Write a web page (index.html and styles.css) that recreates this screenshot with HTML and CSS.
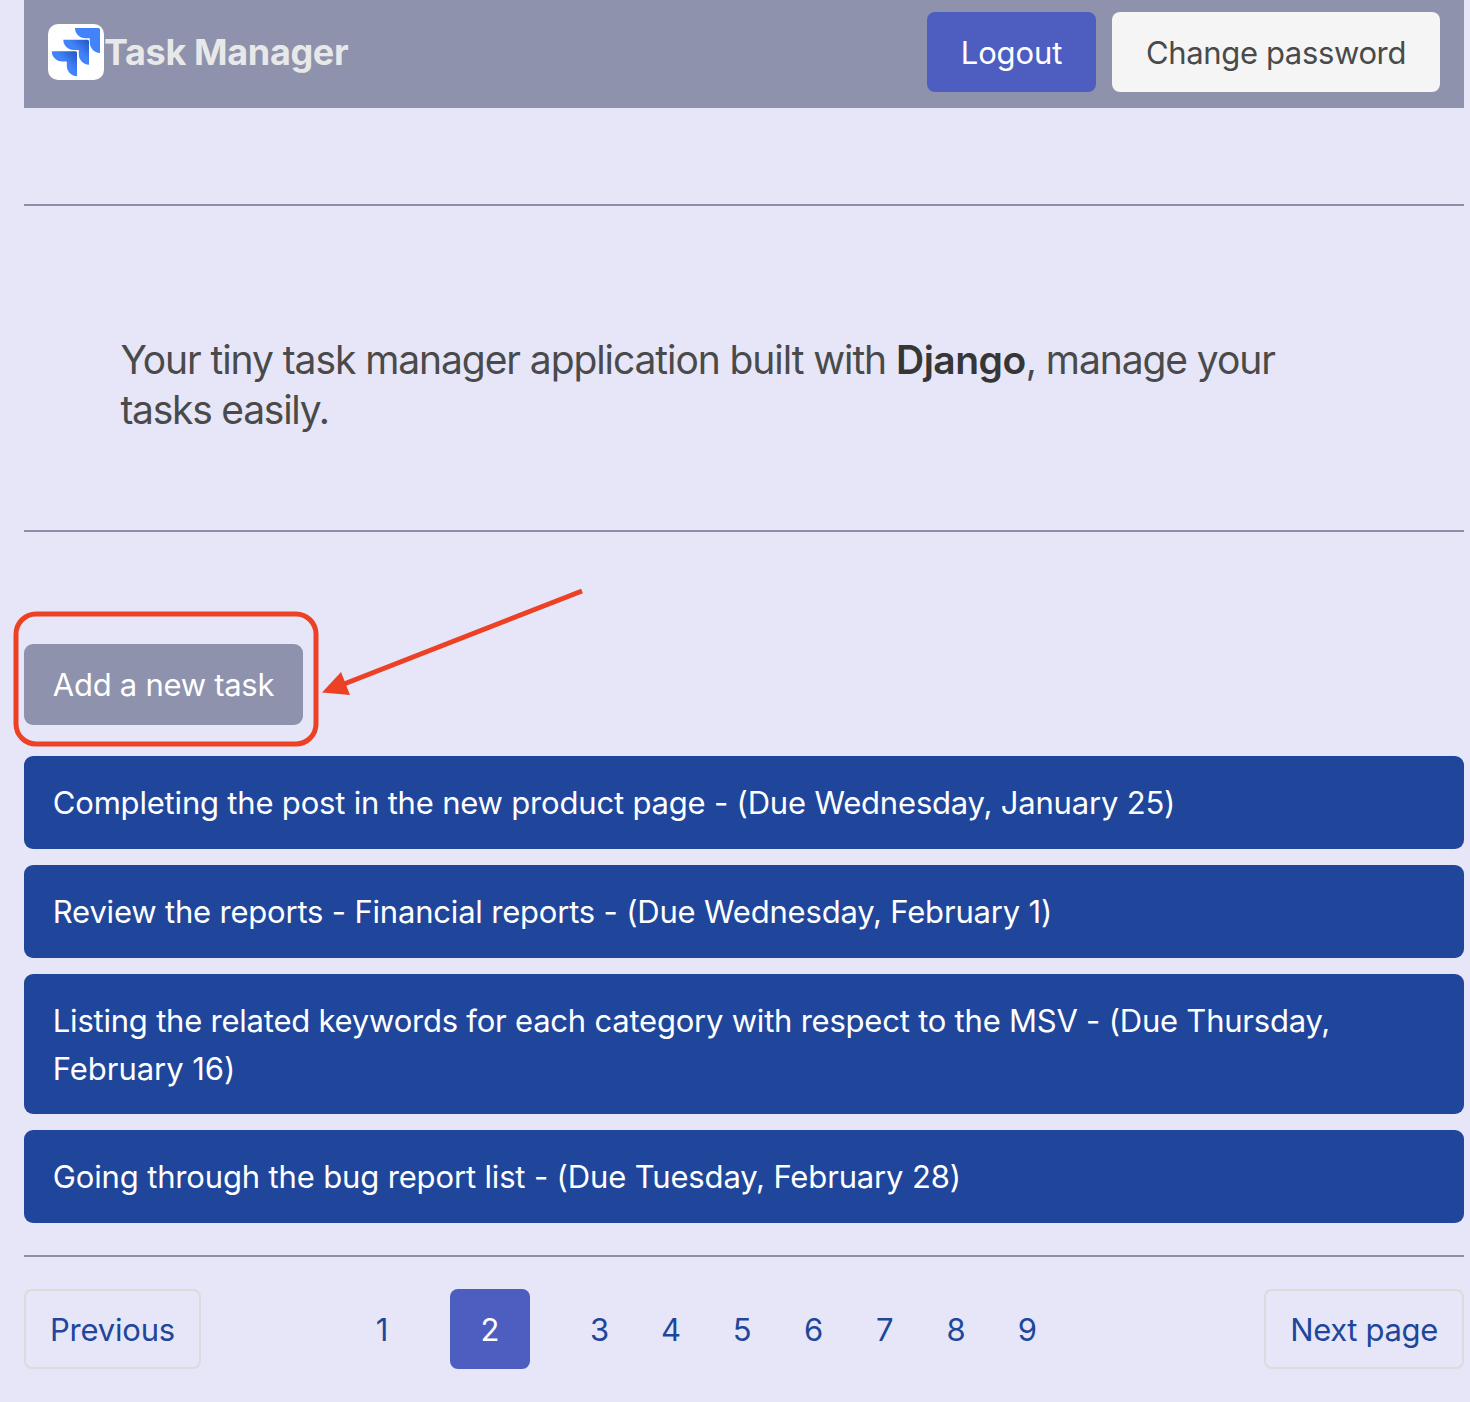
FILE: index.html
```html
<!DOCTYPE html>
<html lang="en">
<head>
<meta charset="utf-8">
<title>Task Manager</title>
<link rel="stylesheet" href="styles.css">
</head>
<body>
<nav class="navbar">
  <a class="brand">
    <svg class="logo" viewBox="0 0 56 56" width="56" height="56" aria-hidden="true">
      <defs>
        <linearGradient id="fade-low" gradientUnits="userSpaceOnUse" x1="29" y1="28" x2="17" y2="40">
          <stop offset="0" stop-color="#2256c4"/><stop offset="0.9" stop-color="#4383fa"/>
        </linearGradient>
        <linearGradient id="fade-mid" gradientUnits="userSpaceOnUse" x1="41" y1="16" x2="29" y2="28">
          <stop offset="0" stop-color="#2256c4"/><stop offset="0.9" stop-color="#4383fa"/>
        </linearGradient>
      </defs>
      <rect width="56" height="56" rx="10" fill="#fff"/>
      <path fill="#4383fa" d="M27 4H50.5Q52 4 52 5.5V29C46 28.500 41.800 24 41.800 18.500V14.200H37.500C31.500 14.200 27 10 27 4Z"/>
      <path fill="url(#fade-mid)" d="M15.300 15.700H39.500Q41 15.700 41 17.200V40.700C35 40.200 30.800 35.700 30.800 30.200V25.900H26C20 25.900 15.300 21.700 15.300 15.700Z"/>
      <path fill="url(#fade-low)" d="M3.800 27.300H27.500Q29 27.300 29 28.800V52.300C23 51.800 18.800 47.300 18.800 41.800V37.500H14.500C8.500 37.500 3.800 33.300 3.800 27.300Z"/>
    </svg>
    <span class="brand-name">Task Manager</span>
  </a>
  <div class="buttons">
    <a class="button primary">Logout</a>
    <a class="button light">Change password</a>
  </div>
</nav>
<hr class="rule rule-top">
<p class="subtitle">Your tiny task manager application built with <strong>Django</strong>, manage your<br><span class="subtitle-end">tasks easily.</span></p>
<hr class="rule rule-mid">
<div class="add-wrap">
  <a class="add">Add a new task</a>
  <svg class="annotation" width="580" height="170" viewBox="10 580 580 170" aria-hidden="true">
    <rect x="16" y="614" width="300" height="130" rx="20" fill="none" stroke="#ec4125" stroke-width="5"/>
    <path d="M582 591L344 684" stroke="#ec4125" stroke-width="5"/>
    <path d="M322 692.500L341 672L350 695Z" fill="#ec4125"/>
  </svg>
</div>
<main class="tasks">
  <a class="task">Completing the post in the new product page - (Due Wednesday, January 25)</a>
  <a class="task">Review the reports - Financial reports - (Due Wednesday, February 1)</a>
  <a class="task task-long">Listing the related keywords for each category with respect to the MSV - (Due Thursday,<br><span class="task-end">February 16)</span></a>
  <a class="task task-last">Going through the bug report list - (Due Tuesday, February 28)</a>
</main>
<hr class="rule rule-bottom">
<nav class="pagination">
  <a class="page-button">Previous</a>
  <ul class="pages">
    <li>1</li><li class="current">2</li><li>3</li><li>4</li><li>5</li><li>6</li><li>7</li><li>8</li><li>9</li>
  </ul>
  <a class="page-button next">Next page</a>
</nav>
</body>
</html>
```

FILE: styles.css
```css
* { box-sizing: border-box; }
body {
  margin: 0;
  padding: 0 6px 0 24px;
  background: #e6e6f8;
  color: #4a4a4a;
  font: 31px/48px Inter, "Liberation Sans", sans-serif;
}
.navbar {
  display: flex;
  align-items: center;
  justify-content: space-between;
  height: 108px;
  padding: 0 24px 4px;
  background: #8e92ac;
}
.brand { display: flex; align-items: center; }
.logo { display: block; }
.brand-name { color: #e8e8e8; font-size: 36px; font-weight: 700; letter-spacing: -0.35px; }
.buttons { display: flex; gap: 16px; }
.button {
  display: flex;
  align-items: center;
  justify-content: center;
  height: 80px;
  padding-top: 2px;
  border-radius: 8px;
  white-space: nowrap;
}
.primary { width: 169px; background: #4e5ec0; color: #fff; letter-spacing: -0.1px; }
.light { width: 328px; background: #f5f5f5; letter-spacing: -0.36px; }
.rule { height: 2px; margin: 0; border: 0; background: #8c8fa8; }
.rule-top { margin-top: 96px; }
.subtitle {
  margin: 129px 0 95px 96.4px;
  font-size: 39px;
  line-height: 50px;
  letter-spacing: -1.08px;
  white-space: nowrap;
}
.subtitle strong { color: #363636; font-weight: 600; letter-spacing: -0.5px; }
.subtitle-end { letter-spacing: -1.25px; }
.add-wrap { position: relative; padding: 112px 0 31px; }
.add {
  display: flex;
  align-items: center;
  justify-content: center;
  width: 279px;
  height: 81px;
  padding-top: 1px;
  border-radius: 9px;
  background: #8e92ac;
  color: #fff;
  letter-spacing: -0.28px;
}
.annotation { position: absolute; left: -14px; top: 48px; }
.tasks { display: flex; flex-direction: column; gap: 16px; }
.task {
  padding: 23px 28.8px 21.8px;
  border-radius: 9px;
  background: #20469b;
  color: #fff;
  letter-spacing: -0.19px;
  white-space: nowrap;
}
.task-long { letter-spacing: -0.22px; }
.task-end { letter-spacing: -0.05px; }
.task-last { letter-spacing: -0.15px; }
.rule-bottom { margin: 32px 0; }
.pagination { display: flex; justify-content: space-between; color: #20469b; }
.page-button {
  display: flex;
  align-items: center;
  justify-content: center;
  width: 177px;
  height: 80px;
  padding-top: 2px;
  border: 2px solid #dbdbdb;
  border-radius: 8px;
  letter-spacing: -0.2px;
  white-space: nowrap;
}
.next { width: 200px; letter-spacing: -0.35px; }
.pages {
  display: grid;
  grid-template-columns: 136px 80px 34px repeat(7, 71.300px);
  margin: 0 auto 0 113px;
  padding: 0;
  list-style: none;
  text-align: center;
}
.pages li { height: 80px; padding-top: 1px; line-height: 79px; }
.pages .current { border-radius: 8px; background: #4e5ec0; color: #fff; }
.pages .current + li { grid-column: 4; }
```
